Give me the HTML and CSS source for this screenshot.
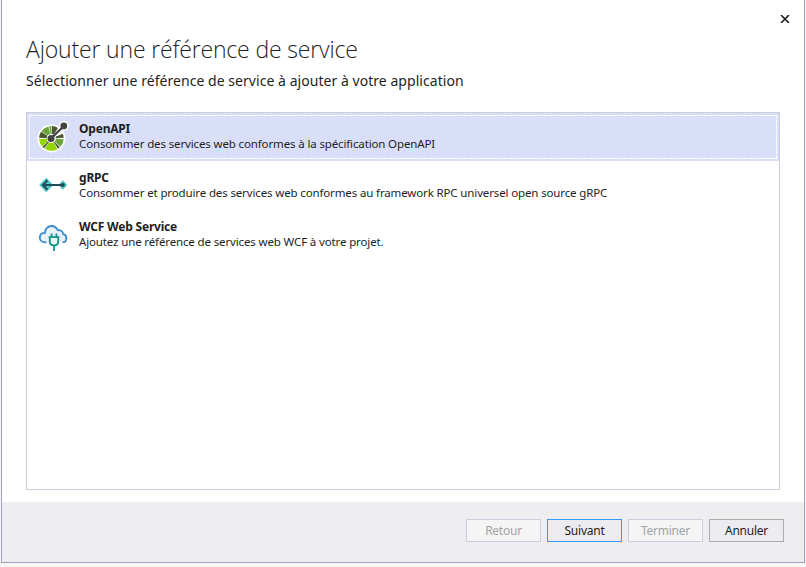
FILE: index.html
```html
<!DOCTYPE html>
<html lang="fr">
<head>
<meta charset="utf-8">
<title>Ajouter une référence de service</title>
<link rel="stylesheet" href="styles.css">
</head>
<body>
<main class="dialog">
  <button class="close" aria-label="Fermer"><svg width="10" height="8" viewBox="0 0 10 8"><path d="M1 0l8 8M9 0L1 8" stroke="#1e1e1e" stroke-width="1.6"/></svg></button>
  <header class="header">
    <h1>Ajouter une référence de service</h1>
    <p>Sélectionner une référence de service à ajouter à votre application</p>
  </header>
  <ul class="list">
    <li class="item selected">
      <svg class="icon" width="32" height="32" viewBox="0 0 32 32">
        <circle cx="14.4" cy="17.4" r="14" fill="#fff"/>
        <path d="M14 17L27 5" stroke="#fff" stroke-width="5"/><circle cx="27" cy="4.800" r="4.800" fill="#fff"/>
        <g fill="none" stroke-width="8">
          <circle cx="14.4" cy="17.4" r="8.300" stroke="#6ba43a" pathLength="100" stroke-dasharray="11 89" stroke-dashoffset="-1"/>
          <circle cx="14.4" cy="17.4" r="8.300" stroke="#4c5930" pathLength="100" stroke-dasharray="3 97" stroke-dashoffset="-13"/>
          <circle cx="14.4" cy="17.4" r="8.300" stroke="#91d400" pathLength="100" stroke-dasharray="17 83" stroke-dashoffset="-17"/>
          <circle cx="14.4" cy="17.4" r="8.300" stroke="#4c5930" pathLength="100" stroke-dasharray="3 97" stroke-dashoffset="-35"/>
          <circle cx="14.4" cy="17.4" r="8.300" stroke="#91d400" pathLength="100" stroke-dasharray="10 90" stroke-dashoffset="-39"/>
          <circle cx="14.4" cy="17.4" r="8.300" stroke="#4c5930" pathLength="100" stroke-dasharray="8 92" stroke-dashoffset="-51"/>
          <circle cx="14.4" cy="17.4" r="8.300" stroke="#6ba43a" pathLength="100" stroke-dasharray="11 89" stroke-dashoffset="-60"/>
          <circle cx="14.4" cy="17.4" r="8.300" stroke="#4c5930" pathLength="100" stroke-dasharray="8 92" stroke-dashoffset="-76"/>
          <circle cx="14.4" cy="17.4" r="8.300" stroke="#6ba43a" pathLength="100" stroke-dasharray="3 97" stroke-dashoffset="-72"/>
          <circle cx="14.4" cy="17.4" r="8.300" stroke="#4c5930" pathLength="100" stroke-dasharray="5 95" stroke-dashoffset="-94"/>
        </g>
        <circle cx="14.2" cy="17.4" r="4.500" fill="#fff"/>
        <path d="M14 17.400L27 5" stroke="#434343" stroke-width="2.200"/>
        <circle cx="14" cy="17.400" r="3.500" fill="#434343"/><circle cx="26.800" cy="4.900" r="3.400" fill="#434343"/>
      </svg>
      <div class="copy"><h2>OpenAPI</h2><p>Consommer des services web conformes à la spécification OpenAPI</p></div>
    </li>
    <li class="item">
      <svg class="icon" width="32" height="32" viewBox="0 0 32 32">
        <path d="M2.200 15l7-7.300 7.200 7.300-7.200 7.300zM21.300 15l4.500-4.800 4.500 4.800-4.500 4.800z" fill="#50c8c6"/>
        <path d="M6 15h19M10.500 10.200L5.800 15l4.700 4.800" fill="none" stroke="#244b5a" stroke-width="2"/><circle cx="25.800" cy="15" r="2" fill="#244b5a"/>
      </svg>
      <div class="copy"><h2>gRPC</h2><p>Consommer et produire des services web conformes au framework RPC universel open source gRPC</p></div>
    </li>
    <li class="item">
      <svg class="icon" width="32" height="32" viewBox="0 0 32 32">
        <g transform="translate(1 1)">
        <path d="M8.500 22.400H7.200C3.800 22.400 1.800 20.200 1.800 17.500S3.800 12.800 7 12.800C7 8.600 10 6 13.500 6c3 0 5.200 1.600 6.200 4.200 3.300-.5 5.400 1.600 5.500 4 2 .3 3.200 1.900 3.200 4 0 2.400-1.400 4.200-3.900 4.200" fill="#e8f0f8" stroke="#3c8ccc" stroke-width="1.800"/>
        <path d="M11 17.200h10v4.500c0 3-1.800 4.500-5 4.500s-5-1.500-5-4.500z" fill="#e8f6f4"/>
        <path d="M10.600 17.200h10.800M11.800 17.500v4.300c0 2.500 1.600 3.600 4.200 3.600s4.200-1.100 4.200-3.600v-4.300M13.600 17.500v-4M18.400 17.500v-4M16 25.500v5.500" fill="none" stroke="#129488" stroke-width="1.800"/>
        </g>
      </svg>
      <div class="copy"><h2>WCF Web Service</h2><p>Ajoutez une référence de services web WCF à votre projet.</p></div>
    </li>
  </ul>
  <footer class="footer">
    <button disabled>Retour</button>
    <button class="primary">Suivant</button>
    <button disabled>Terminer</button>
    <button>Annuler</button>
  </footer>
</main>
</body>
</html>
```
FILE: styles.css
```css
* { box-sizing: border-box; }
body { margin: 0; height: 567px; overflow: hidden; background: #f7f7f8; padding: 0 1px; font-family: "Noto Sans", "Open Sans", sans-serif; color: #1e1e1e; }
h1, h2, p, ul { margin: 0; padding: 0; font-weight: 400; white-space: nowrap; }
.dialog { position: relative; height: 563px; display: flex; flex-direction: column; background: #fff; border: 1px solid #9b9fc0; border-top: 0; }
.close { position: absolute; right: 14px; top: 15px; width: 10px; height: 8px; border: 0; padding: 0; background: none; }
.close svg { display: block; }
.header { height: 112px; padding: 32px 0 0 24px; }
.header h1 { font-family: "Open Sans", sans-serif; font-weight: 300; font-size: 23px; line-height: 34px; letter-spacing: -0.16px; }
.header p { font-size: 14px; line-height: 20px; margin-top: 5px; letter-spacing: 0.045px; }
.list { height: 378px; margin: 0 24px; border: 1px solid #cccedb; list-style: none; }
.item { height: 49px; padding: 8px 0 0 10px; display: flex; }
.selected { position: relative; height: 48px; margin-bottom: 1px; background: #d9dff8; outline: 1px dashed #fff; outline-offset: -3px; }
.selected::after { content: ""; position: absolute; inset: 2px; border: 1px solid rgba(255, 255, 255, .5); }
.icon { flex: none; }
.copy { margin-left: 10px; font-size: 11.5px; line-height: 15px; letter-spacing: -0.135px; }
.copy h2 { font-size: 12px; line-height: 15px; font-weight: 700; letter-spacing: -0.2px; }
.footer { margin-top: 12px; flex: 1; background: #eeeef0; display: flex; justify-content: flex-end; gap: 6px; padding: 17px 20px 0 0; }
.footer button { width: 75px; height: 23px; padding: 0; border: 1px solid #acacac; background: #ececf0; color: #1e1e1e; font: 12px "Noto Sans", sans-serif; line-height: 21px; letter-spacing: -0.25px; }
.footer button:disabled { border-color: #cccedb; background: #f5f5f5; color: #a2a4a5; }
.footer .primary { border-color: #3399ff; }
```
